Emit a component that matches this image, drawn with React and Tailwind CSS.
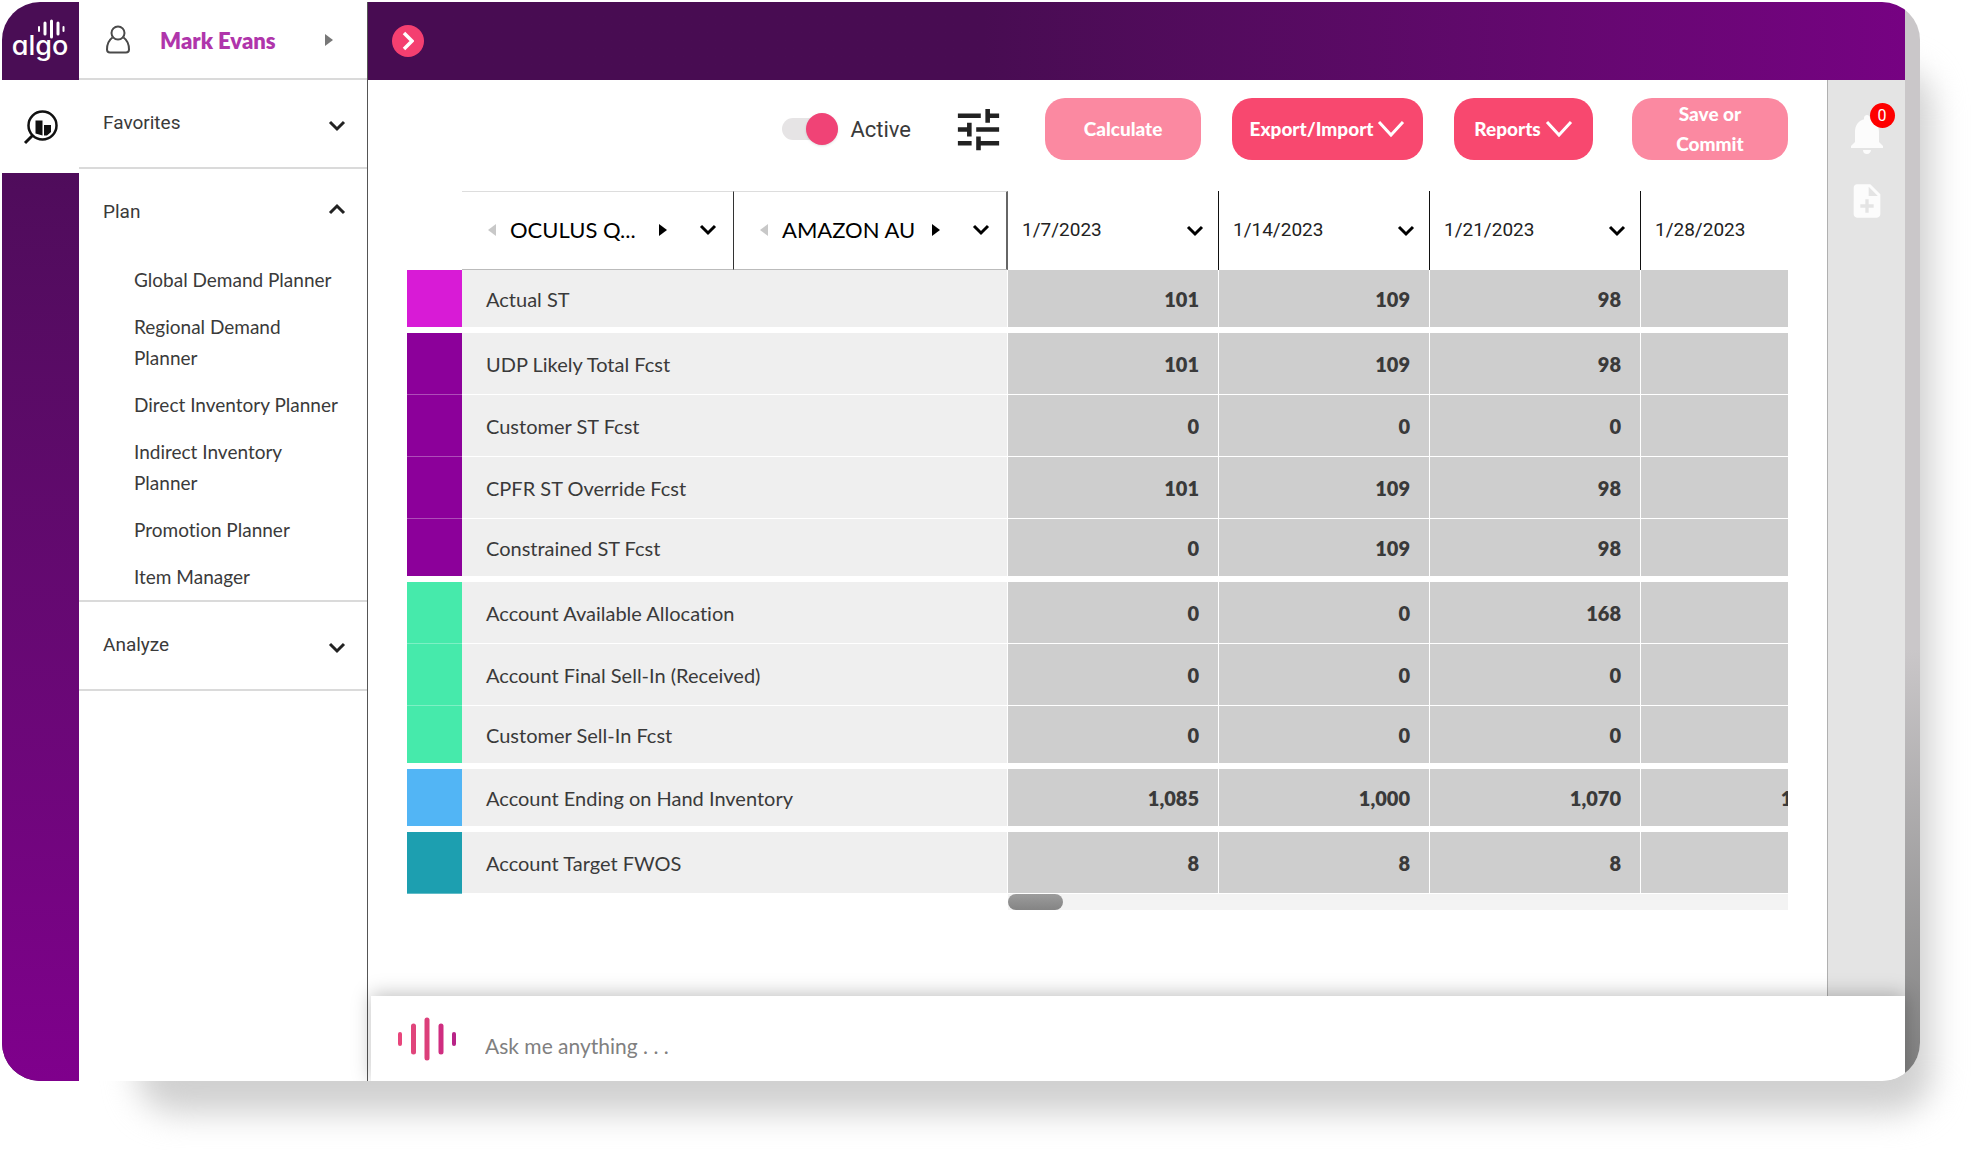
import React, { useState } from 'react';
import { MdTune, MdNotifications, MdNoteAdd } from 'react-icons/md';

const planLinks = [
  'Global Demand Planner',
  'Regional Demand Planner',
  'Direct Inventory Planner',
  'Indirect Inventory Planner',
  'Promotion Planner',
  'Item Manager',
];

const dates = ['1/7/2023', '1/14/2023', '1/21/2023', '1/28/2023'];

// last: true closes a colour group and leaves the white gap below it
const rows = [
  { label: 'Actual ST', color: 'bg-[#d81bd6]', values: ['101', '109', '98', ''], last: true },
  { label: 'UDP Likely Total Fcst', color: 'bg-[#8c009a]', values: ['101', '109', '98', ''] },
  { label: 'Customer ST Fcst', color: 'bg-[#8c009a]', values: ['0', '0', '0', ''] },
  { label: 'CPFR ST Override Fcst', color: 'bg-[#8c009a]', values: ['101', '109', '98', ''] },
  { label: 'Constrained ST Fcst', color: 'bg-[#8c009a]', values: ['0', '109', '98', ''], last: true },
  { label: 'Account Available Allocation', color: 'bg-[#46eaab]', values: ['0', '0', '168', ''] },
  { label: 'Account Final Sell-In (Received)', color: 'bg-[#46eaab]', values: ['0', '0', '0', ''] },
  { label: 'Customer Sell-In Fcst', color: 'bg-[#46eaab]', values: ['0', '0', '0', ''], last: true },
  { label: 'Account Ending on Hand Inventory', color: 'bg-[#52b5f5]', values: ['1,085', '1,000', '1,070', '1,050'], last: true },
  { label: 'Account Target FWOS', color: 'bg-[#1d9fb0]', values: ['8', '8', '8', ''] },
];

function Chevron({ up = false, className = '' }) {
  return (
    <svg viewBox="0 0 18 12" className={`w-[18px] h-3 shrink-0 ${className}`} fill="none" stroke="currentColor" strokeWidth="3">
      <path d={up ? 'M2 10L9 3l7 7' : 'M2 2l7 7 7-7'} />
    </svg>
  );
}

function WideChevron() {
  return (
    <svg viewBox="0 0 28 18" className="w-7 h-[18px] shrink-0" fill="none" stroke="currentColor" strokeWidth="3">
      <path d="M2 2l12 13L26 2" />
    </svg>
  );
}

function Caret({ left = false, className = '' }) {
  return (
    <svg viewBox="0 0 8 12" className={`w-2 h-3 shrink-0 ${className}`} fill="currentColor">
      <path d={left ? 'M8 0v12L0 6z' : 'M0 0v12l8-6z'} />
    </svg>
  );
}

function AlgoLogo() {
  return (
    <svg viewBox="0 0 77 78" className="w-full h-full" role="img" aria-label="algo">
      <g stroke="#fff" strokeWidth="3" strokeLinecap="round">
        <path d="M37 25v4" strokeWidth="2" />
        <path d="M43 21v11" />
        <path d="M49.500 19v16" />
        <path d="M56 21v11" />
        <path d="M61.500 25v4" strokeWidth="2" />
      </g>
      <text x="38" y="53" textAnchor="middle" fill="#fff" fontSize="27" className="font-['Inter',sans-serif] font-medium [font-feature-settings:'cv11']">algo</text>
    </svg>
  );
}

function UserIcon() {
  return (
    <svg viewBox="0 0 26 30" className="w-[26px] h-[30px]" fill="none" stroke="#4a4a4a" strokeWidth="2">
      <circle cx="13" cy="8" r="6.500" />
      <path d="M7.500 12.500C4 15 2 19 2 24.500c0 2 1 3 3 3h16c2 0 3-1 3-3 0-5.500-2-9.500-5.500-12" />
    </svg>
  );
}

function InsightIcon() {
  return (
    <svg viewBox="0 0 36 36" className="w-9 h-9" fill="none" stroke="#111">
      <circle cx="19.500" cy="16.500" r="14" strokeWidth="2.500" />
      <path d="M10 26l-8 8" strokeWidth="3" />
      <path d="M12.500 11.500h7v15l-7-2zM21 16h7v7l-4 3.500h-3z" fill="#111" stroke="none" />
    </svg>
  );
}

function VoiceIcon() {
  return (
    <svg viewBox="0 0 62 44" className="w-[62px] h-11 shrink-0" strokeLinecap="round">
      <path d="M3 17v10" stroke="#e8467c" strokeWidth="4" />
      <path d="M16.500 9v26" stroke="#e0457b" strokeWidth="5" />
      <path d="M30 3v38" stroke="#dc3f7a" strokeWidth="5" />
      <path d="M44 9v26" stroke="#cf2d80" strokeWidth="5" />
      <path d="M57 17v10" stroke="#b82487" strokeWidth="4" />
    </svg>
  );
}

function Section({ title, open = false, children }) {
  return (
    <section className="border-b-2 border-[#dadada]">
      <button className="w-full h-[87px] pl-6 pr-[21px] flex items-center justify-between text-left">
        <span className="font-['Roboto',sans-serif] text-[19px] text-[#3a3a3a]">{title}</span>
        <Chevron up={open} className={open ? 'mb-2 text-[#222]' : 'mt-1 text-[#222]'} />
      </button>
      {children}
    </section>
  );
}

function Picker({ label }) {
  return (
    <div className="flex items-center pl-[26px] pr-4">
      <button aria-label="Previous" className="text-[#c8c8c8]"><Caret left /></button>
      <span className="ml-[14px] text-[22px] whitespace-nowrap">{label}</span>
      <button aria-label="Next" className="ml-auto"><Caret /></button>
      <button aria-label="Open list" className="ml-8"><Chevron /></button>
    </div>
  );
}

export default function App() {
  const [active, setActive] = useState(true);

  return (
    <div className="min-h-screen flex bg-white overflow-hidden pt-0.5 pl-0.5 pr-[60px] pb-[69px] font-['Lato',sans-serif] text-[#3a3a3a] [font-variant-ligatures:no-common-ligatures]">
      <div className="flex-1 min-w-0 flex relative">
        {/* Soft shadow cast to the lower right */}
        <div className="absolute left-[135px] top-[66px] -right-3 -bottom-8 rounded-[38px] bg-[#d0d0d0] blur-[16px]" />

        <div className="relative flex-1 min-w-0 flex rounded-[38px] overflow-hidden bg-white">
          {/* Icon rail */}
          <nav className="w-[77px] shrink-0 flex flex-col bg-[#4a0d55]">
            <div className="h-[78px]"><AlgoLogo /></div>
            <button aria-label="Insights" className="h-[93px] bg-white flex items-center justify-center">
              <InsightIcon />
            </button>
            <div className="flex-1 bg-linear-to-b from-[#4f0c5b] to-[#7f008c]" />
          </nav>

          {/* Sidebar */}
          <aside className="w-[289px] shrink-0 border-r border-[#555] bg-white">
            <button className="w-full h-[78px] pl-[26px] pr-[34px] flex items-center border-b-2 border-[#dadada]">
              <UserIcon />
              <span className="ml-[29px] text-[22px] font-extrabold text-[#b035ab]">Mark Evans</span>
              <Caret className="ml-auto text-[#777]" />
            </button>
            <Section title="Favorites" />
            <Section title="Plan" open>
              <ul className="pl-[55px] pr-6 pt-2 pb-2 space-y-4">
                {planLinks.map((name) => (
                  <li key={name} className="text-[19px] leading-[31px]">
                    <a href="#">{name}</a>
                  </li>
                ))}
              </ul>
            </Section>
            <Section title="Analyze" />
          </aside>

          {/* Main area */}
          <main className="flex-1 min-w-0 flex flex-col">
            <header className="h-[78px] shrink-0 pl-6 flex items-center bg-linear-to-r from-[#480c52] from-40% to-[#760282]">
              <button aria-label="Expand" className="w-8 h-8 rounded-full bg-[#f43f70] text-white flex items-center justify-center">
                <svg viewBox="0 0 12 20" className="w-3 h-5" fill="none" stroke="currentColor" strokeWidth="3.500">
                  <path d="M2 2l8 8-8 8" />
                </svg>
              </button>
            </header>

            <div className="flex-1 flex">
              <div className="flex-1 min-w-0 px-[39px] pt-[18px]">
                <div className="flex items-center justify-end text-[19px] font-black text-white">
                  <label className="flex items-center gap-3 font-['Roboto',sans-serif] font-normal text-[22px] text-[#3a3a3a]">
                    <input
                      type="checkbox"
                      checked={active}
                      onChange={(e) => setActive(e.target.checked)}
                      className="appearance-none relative w-14 h-[22px] rounded-full bg-[#e6e4e5] before:absolute before:-top-[5px] before:left-0 checked:before:left-6 before:w-8 before:h-8 before:rounded-full before:bg-[#f04376] before:shadow"
                    />
                    Active
                  </label>
                  <button aria-label="Filters" className="ml-10 mr-[39px] text-[#222]"><MdTune size={55} /></button>
                  <button className="w-[156px] h-[62px] rounded-[20px] bg-[#fb89a1]">Calculate</button>
                  <button className="ml-[31px] w-[191px] h-[62px] rounded-[20px] bg-[#f8486f] flex items-center justify-center gap-1">
                    Export/Import <WideChevron />
                  </button>
                  <button className="ml-[31px] w-[139px] h-[62px] rounded-[20px] bg-[#f8486f] flex items-center justify-center gap-1">
                    Reports <WideChevron />
                  </button>
                  <button className="ml-[39px] w-[156px] h-[62px] px-8 rounded-[20px] bg-[#fb89a1] leading-[30px]">Save or Commit</button>
                </div>

                <div className="mt-[31px] overflow-hidden">
                  <table className="w-[1445px] table-fixed border-separate border-spacing-0 text-xl">
                    <colgroup>
                      <col className="w-[55px]" />
                      <col className="w-[272px]" />
                      <col className="w-[274px]" />
                      <col className="w-[211px]" />
                      <col className="w-[211px]" />
                      <col className="w-[211px]" />
                      <col className="w-[211px]" />
                    </colgroup>
                    <thead>
                      <tr className="h-[79px] text-black">
                        <td />
                        <th className="p-0 font-normal border-t border-b border-r border-t-[#ddd] border-b-[#bbb] border-r-[#333]">
                          <Picker label="OCULUS Q..." />
                        </th>
                        <th className="p-0 font-normal border-t border-b border-r-2 border-t-[#ddd] border-b-[#bbb] border-r-[#666]">
                          <Picker label="AMAZON AU" />
                        </th>
                        {dates.map((date) => (
                          <th key={date} className="p-0 font-normal border-r border-[#111]">
                            <div className="flex items-center justify-between px-3.5 font-['Roboto',sans-serif] text-[19px] text-[#222]">
                              {date}
                              <button aria-label={`Options for ${date}`} className="text-black"><Chevron /></button>
                            </div>
                          </th>
                        ))}
                      </tr>
                    </thead>
                    <tbody>
                      {rows.map((row) => (
                        <tr key={row.label} className={row.last ? 'h-[63px]' : 'h-[62px]'}>
                          <td className={`p-0 ${row.color} ${row.last ? 'border-b-[6px] border-white' : 'border-b border-white/30'}`} />
                          <th colSpan={2} className={`p-0 pl-6 text-left font-normal bg-[#efefef] border-white border-r ${row.last ? 'border-b-[6px]' : 'border-b'}`}>
                            {row.label}
                          </th>
                          {row.values.map((value, i) => (
                            <td key={i} className={`p-0 pr-[19px] text-right font-extrabold bg-[#cecece] border-white border-r ${row.last ? 'border-b-[6px]' : 'border-b'}`}>
                              {value}
                            </td>
                          ))}
                        </tr>
                      ))}
                    </tbody>
                  </table>
                </div>
                <div className="ml-[601px] h-4 bg-[#f3f3f3]">
                  <div className="w-[55px] h-4 rounded-full bg-linear-to-b from-[#9c9c9c] to-[#848484]" />
                </div>
              </div>

              {/* Notifications strip */}
              <aside className="w-[78px] shrink-0 border-l border-[#b0b0b0] bg-[#e4e4e4] flex flex-col items-center pt-[30px] gap-[23px] text-[#fcfcfc]">
                <button aria-label="Notifications" className="relative">
                  <MdNotifications size={48} />
                  <span className="absolute -top-[7px] left-[27px] w-[25px] h-[25px] rounded-full bg-[#fe0000] text-white text-base leading-[25px] text-center font-['Roboto',sans-serif]">0</span>
                </button>
                <button aria-label="Add note"><MdNoteAdd size={40} /></button>
              </aside>
            </div>

            <footer className="relative h-[85px] shrink-0 ml-[3px] pl-[26px] flex items-center gap-[26px] bg-white shadow-[0_-2px_18px_rgba(0,0,0,0.25)]">
              <VoiceIcon />
              <input
                type="text"
                aria-label="Ask me anything"
                placeholder="Ask me anything . . ."
                className="flex-1 mt-3.5 text-[21px] outline-none placeholder:text-[#808080]"
              />
            </footer>
          </main>

          <div className="w-[15px] shrink-0 bg-linear-to-b from-[#cac7c9] from-60% to-[#808080]" />
        </div>
      </div>
    </div>
  );
}
